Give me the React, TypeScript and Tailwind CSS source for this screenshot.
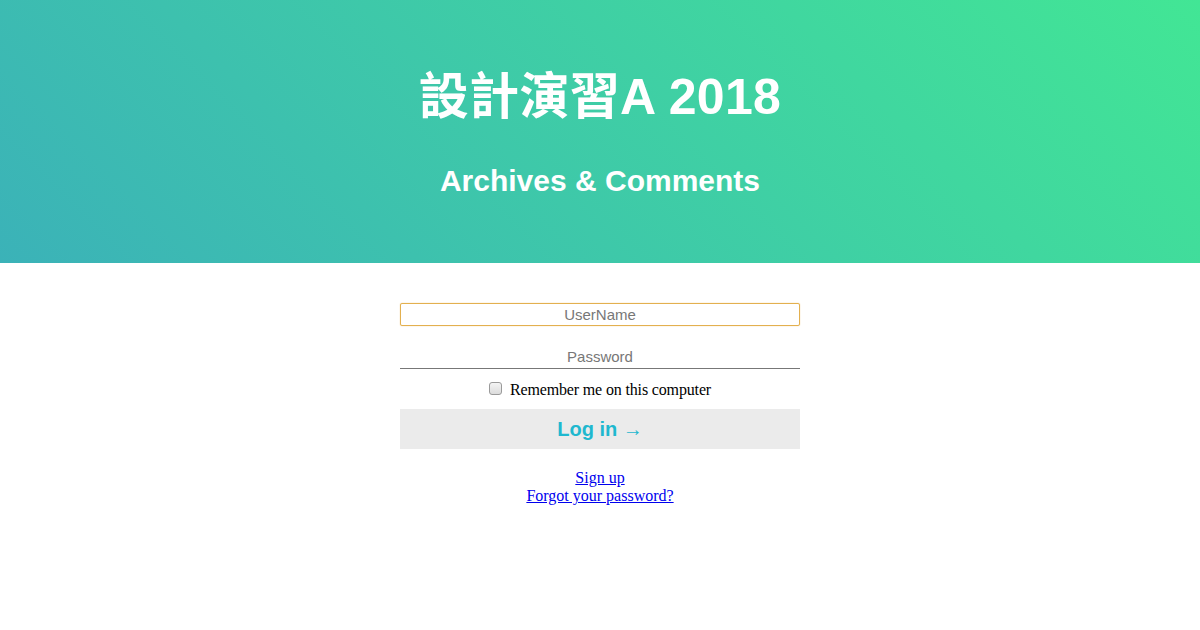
import React from "react";

export default function App() {
  return (
    <div className="w-[1200px] h-[630px] bg-white overflow-hidden">
      <header
        className="h-[263px] flex flex-col items-center bg-[linear-gradient(45deg,#3bb2b8,#42e695)] text-white"
        style={{ fontFamily: '"Liberation Sans", Arial, "Noto Sans CJK TC", sans-serif' }}
      >
        <h1 className="mt-[65px] text-[50px] leading-[64px] font-bold tracking-[0.3px]">設計演習A 2018</h1>
        <h2 className="mt-[34px] text-[30px] leading-[36px] font-bold">Archives &amp; Comments</h2>
      </header>
      <main className="flex flex-col items-center pt-[40px]">
        <form className="w-[400px] flex flex-col items-center" onSubmit={(e) => e.preventDefault()}>
          <input
            type="text"
            placeholder="UserName"
            className="w-[400px] h-[23px] border border-[#e3b04f] rounded-[2px] shadow-[0_0_1px_#e8b04b] text-center text-[15px] placeholder:text-[#777] outline-none"
            style={{ fontFamily: '"Liberation Sans", Arial, sans-serif' }}
          />
          <input
            type="password"
            placeholder="Password"
            className="mt-[19px] w-[400px] h-[24px] border-b border-[#777] text-center text-[15px] placeholder:text-[#777] outline-none"
            style={{ fontFamily: '"Liberation Sans", Arial, sans-serif' }}
          />
          <label
            className="mt-[11px] h-[20px] flex items-center text-[16px] leading-[20px] text-black"
            style={{ fontFamily: '"Liberation Serif", "Times New Roman", serif' }}
          >
            <span className="inline-block w-[13px] h-[13px] mr-[8px] mb-[3px] border border-[#9a9a9a] rounded-[3px] bg-[linear-gradient(#f4f4f4,#dcdcdc)]" />
            <span className="tracking-[-0.15px]">Remember me on this computer</span>
          </label>
          <button
            type="submit"
            className="mt-[9px] w-[400px] h-[40px] bg-[#ebebeb] text-[#1fb8cf] text-[20px] font-bold"
            style={{ fontFamily: '"Liberation Sans", Arial, sans-serif' }}
          >
            Log in →
          </button>
        </form>
        <div
          className="mt-[20px] flex flex-col items-center text-[16px] leading-[18px]"
          style={{ fontFamily: '"Liberation Serif", "Times New Roman", serif' }}
        >
          <a href="#" className="text-[#0000ee] underline">Sign up</a>
          <a href="#" className="text-[#0000ee] underline">Forgot your password?</a>
        </div>
      </main>
    </div>
  );
}
